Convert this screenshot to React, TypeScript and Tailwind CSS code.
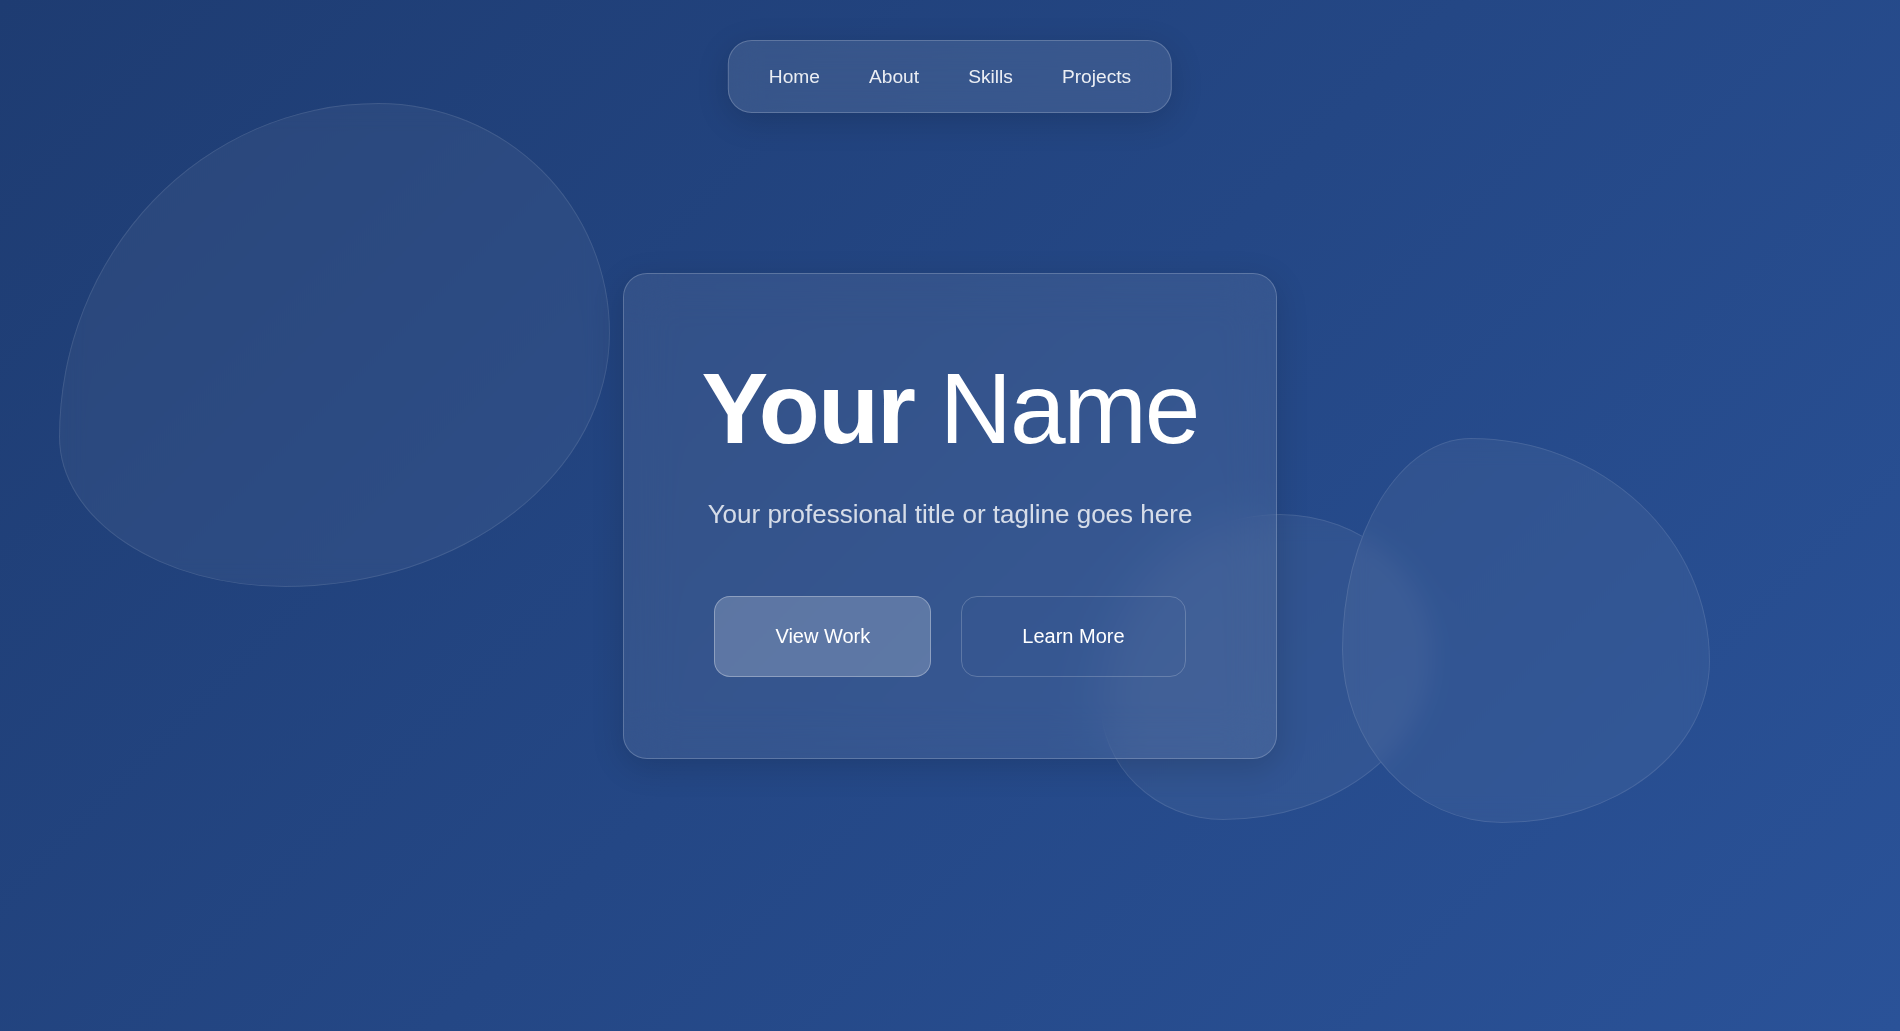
import React from "react";

// Floating glass blobs behind the hero card
const blobs = [
  {
    id: "left",
    className:
      "left-[59px] top-[103px] w-[551px] h-[484px] rounded-[58%_42%_59%_41%/69%_47.5%_52.5%_31%]",
  },
  {
    id: "middle",
    className:
      "left-[1100px] top-[514px] w-[333px] h-[306px] rounded-[54%_46%_63%_37%/61%_45%_55%_39%]",
  },
  {
    id: "right",
    className:
      "left-[1342px] top-[438px] w-[368px] h-[385px] rounded-[35%_65%_56.5%_43.5%/55%_58%_42%_45%]",
  },
];

const navLinks = ["Home", "About", "Skills", "Projects"];

export default function App() {
  return (
    <div className="relative h-[1031px] w-full overflow-hidden bg-[linear-gradient(135deg,#1e3c72_0%,#2a5298_100%)] font-['Liberation_Sans',Arial,sans-serif] text-white">
      {/* Decorative blobs */}
      {blobs.map((b) => (
        <div
          key={b.id}
          className={`absolute border border-white/10 bg-white/5 backdrop-blur-md ${b.className}`}
        />
      ))}

      {/* Top navigation */}
      <nav className="fixed left-1/2 top-10 z-20 flex h-[73px] -translate-x-1/2 items-center gap-[17px] rounded-3xl border border-white/20 bg-white/10 px-6 shadow-[0_8px_32px_rgba(0,0,0,0.15)] backdrop-blur-lg">
        {navLinks.map((link) => (
          <a
            key={link}
            href="#"
            className="px-4 text-[19.2px] leading-none text-white/90"
          >
            {link}
          </a>
        ))}
      </nav>

      {/* Hero */}
      <main className="relative z-10 flex h-full items-center justify-center">
        <section className="flex w-[654px] flex-col items-center rounded-3xl border border-white/20 bg-white/[0.08] px-10 pb-[81px] pt-[84px] text-center shadow-[0_8px_32px_rgba(0,0,0,0.15)] backdrop-blur-xl">
          <h1 className="mb-[37px] whitespace-nowrap text-[100px] leading-none tracking-[-0.02em] text-white">
            <span className="font-bold">Your</span> <span className="font-normal">Name</span>
          </h1>
          <p className="mb-[62px] text-[26px] leading-[1.5] text-white/80">
            Your professional title or tagline goes here
          </p>
          <div className="flex gap-[30px]">
            <button className="flex h-[81px] items-center rounded-2xl border border-white/30 bg-white/20 px-[60px] text-[20px] text-white">
              View Work
            </button>
            <button className="flex h-[81px] items-center rounded-2xl border border-white/20 bg-transparent px-[60px] text-[20px] text-white">
              Learn More
            </button>
          </div>
        </section>
      </main>
    </div>
  );
}
